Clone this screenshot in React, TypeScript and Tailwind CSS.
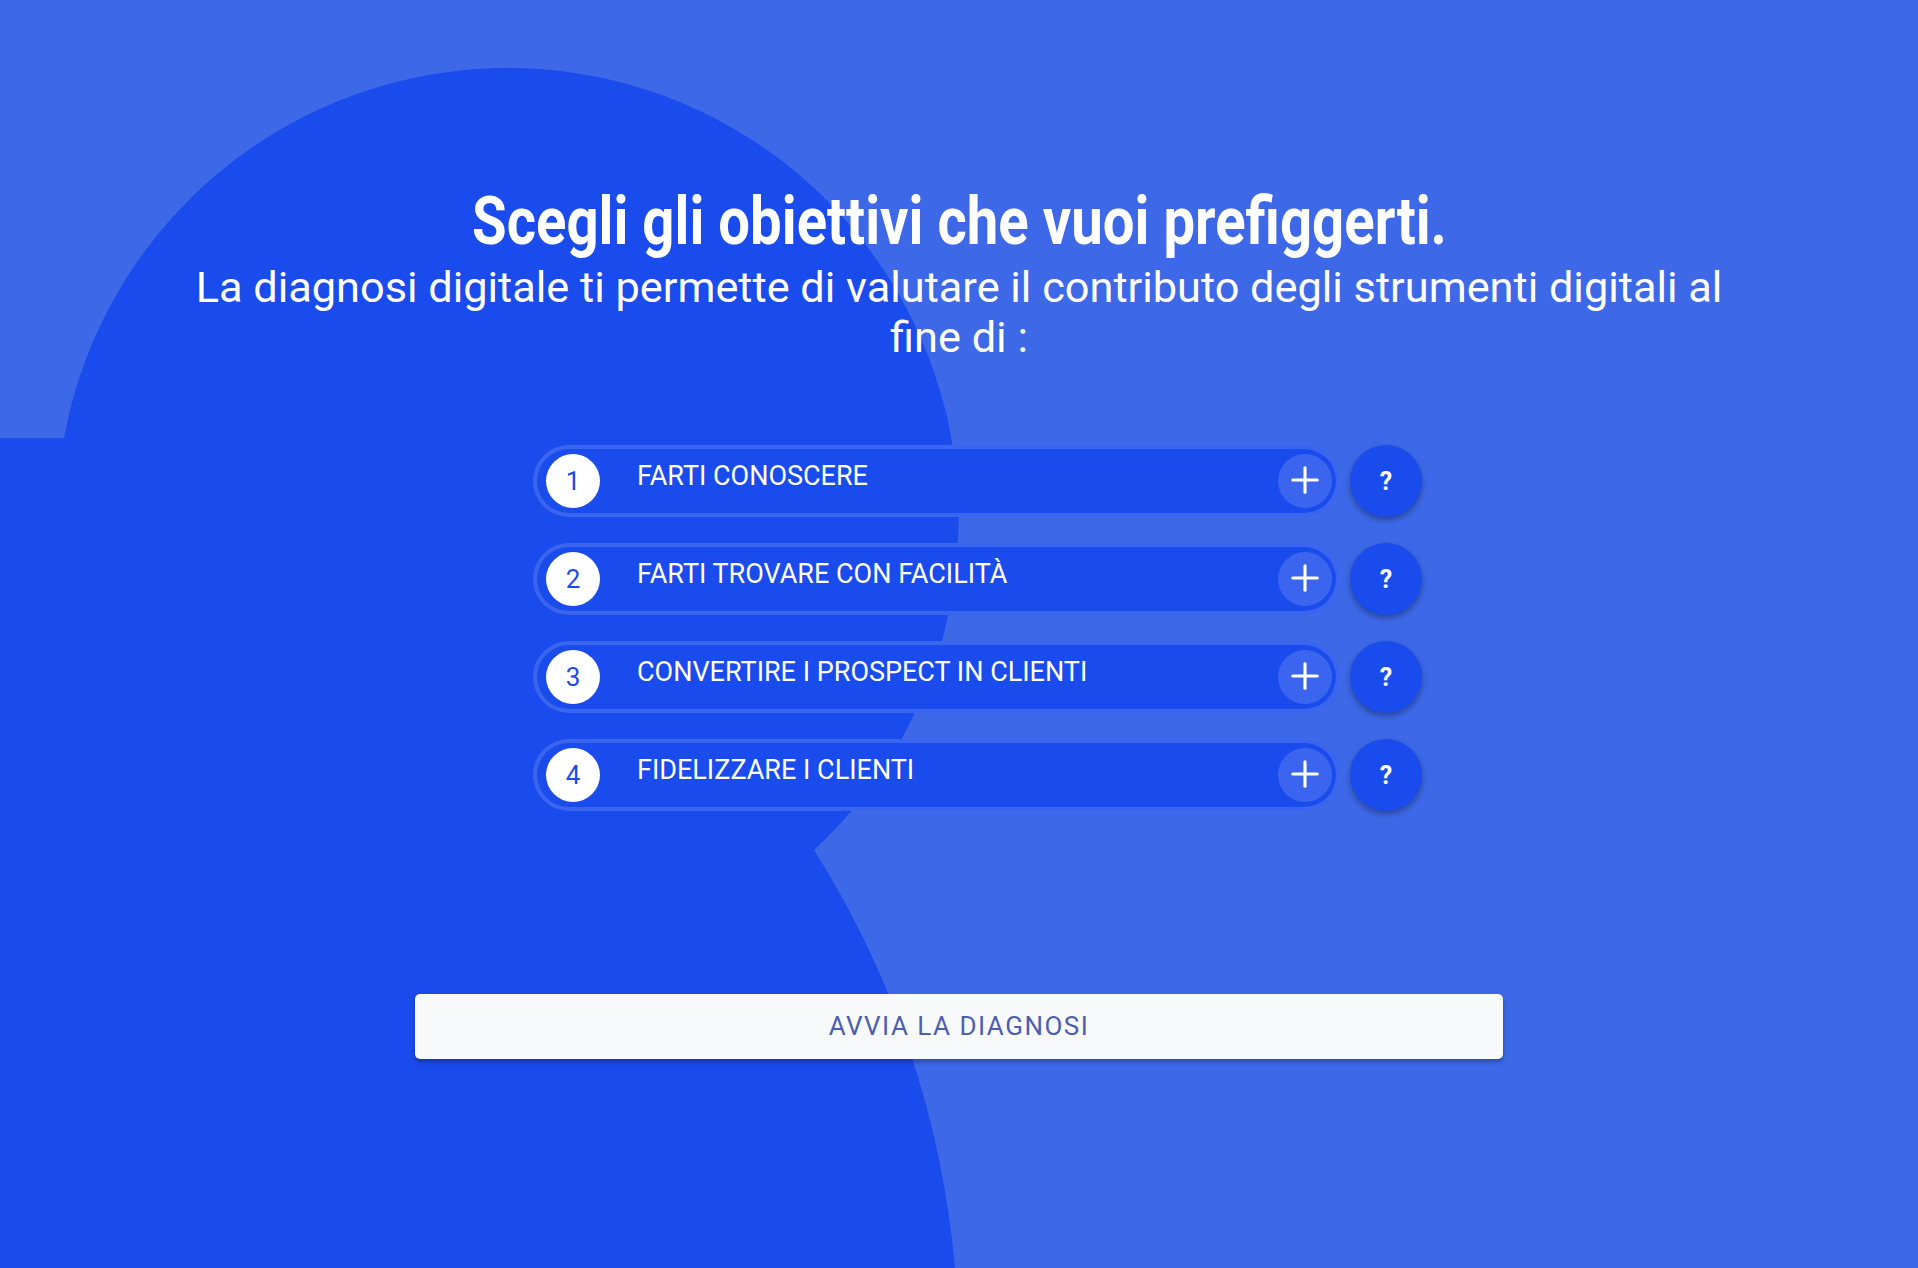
import { Plus } from "lucide-react";

const goals = [
  "FARTI CONOSCERE",
  "FARTI TROVARE CON FACILITÀ",
  "CONVERTIRE I PROSPECT IN CLIENTI",
  "FIDELIZZARE I CLIENTI",
];

function Backdrop() {
  return (
    <svg
      className="absolute inset-0 h-full w-full"
      viewBox="0 0 1918 1268"
      preserveAspectRatio="none"
      aria-hidden="true"
    >
      <path
        d="M0 1268 L0 438 L64 438 A451 451 0 1 1 814 850 A934 934 0 0 1 955 1268 Z"
        fill="#1a4bed"
      />
    </svg>
  );
}

function GoalRow({ index, label }: { index: number; label: string }) {
  return (
    <div className="flex items-center gap-[10px]">
      <div className="flex h-[72px] w-[807px] items-center rounded-full border-4 border-white/15 bg-[#1a4bed] py-[5px] pl-[9px] pr-[4px]">
        <div className="flex h-[54px] w-[54px] shrink-0 items-center justify-center rounded-full bg-white text-[26px] leading-none text-[#1a4bed]">
          {index}
        </div>
        <span className="ml-[37px] flex-1 pb-[10px] text-[27px] leading-none text-white">
          {label}
        </span>
        <button className="flex h-[54px] w-[54px] shrink-0 items-center justify-center rounded-full bg-white/15 pb-[3px] text-white">
          <Plus size={42} strokeWidth={1.8} />
        </button>
      </div>
      <button className="flex h-[72px] w-[72px] items-center justify-center rounded-full bg-[#1a4bed] text-[25px] font-bold leading-none text-white shadow-[0_3px_6px_rgba(0,0,0,0.35)]">
        ?
      </button>
    </div>
  );
}

export default function App() {
  return (
    <div className="relative h-[1268px] w-full overflow-hidden bg-[#3d69e9] font-['Roboto',sans-serif]">
      <Backdrop />

      <div className="relative z-10 flex flex-col items-center">
        <h1 className="mt-[189px] h-[66px] whitespace-nowrap text-[66px] font-bold leading-[66px] text-white">
          <span className="inline-block origin-center scale-x-[0.853]">
            Scegli gli obiettivi che vuoi prefiggerti.
          </span>
        </h1>
        <p className="mt-[8px] w-4/5 text-center text-[43.3px] leading-[50px] text-white">
          La diagnosi digitale ti permette di valutare il contributo degli strumenti digitali al fine di :
        </p>

        <div className="mt-[82px] flex flex-col gap-[26px] pl-[37px]">
          {goals.map((g, i) => (
            <GoalRow key={g} index={i + 1} label={g} />
          ))}
        </div>

        <button className="mt-[183px] h-[65px] w-[1088px] rounded-[5px] bg-[#f8f9fb] text-[26px] tracking-[1.5px] text-[#4b5fae] shadow-[0_3px_5px_rgba(0,0,0,0.3)]">
          AVVIA LA DIAGNOSI
        </button>
      </div>
    </div>
  );
}
